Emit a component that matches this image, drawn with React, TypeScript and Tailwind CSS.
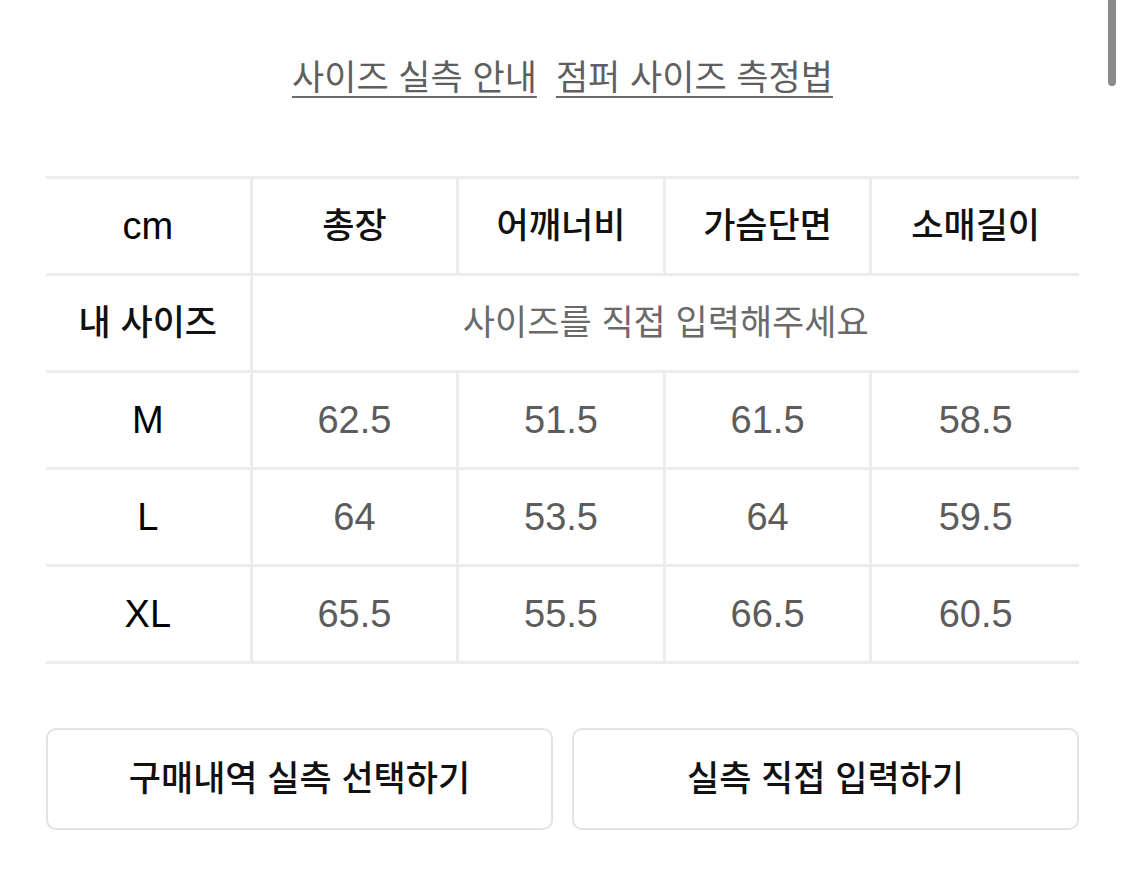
import React from 'react';

// 사이즈 표 데이터
const columns = ['총장', '어깨너비', '가슴단면', '소매길이'];

const sizes = [
  { name: 'M', values: ['62.5', '51.5', '61.5', '58.5'] },
  { name: 'L', values: ['64', '53.5', '64', '59.5'] },
  { name: 'XL', values: ['65.5', '55.5', '66.5', '60.5'] },
];

const font = "font-['Liberation_Sans','Noto_Sans_CJK_KR',sans-serif]";

const Cell: React.FC<{ last?: boolean; className?: string; children: React.ReactNode }> = ({ last, className, children }) => (
  <div
    className={`flex w-1/5 items-center justify-center ${last ? '' : 'border-r-[3px] border-[#ececec]'} ${className || ''}`}
  >
    {children}
  </div>
);

export default function App() {
  return (
    <div className={`relative min-h-[874px] w-full bg-white ${font}`}>
      {/* 스크롤바 */}
      <div className="absolute right-[9px] top-0 h-[86px] w-[8px] rounded-b-full bg-[#8b8b8b]" />

      {/* 상단 링크 */}
      <div className="flex justify-center gap-[19px] pt-[56px] text-[35px] leading-[44px] text-[#5f5f5f]">
        <span className="underline decoration-[#6a6a6a] decoration-2 underline-offset-[6px]">사이즈 실측 안내</span>
        <span className="underline decoration-[#6a6a6a] decoration-2 underline-offset-[6px]">점퍼 사이즈 측정법</span>
      </div>

      {/* 사이즈 표 */}
      <div className="mx-[46px] mt-[76px] border-t-[3px] border-[#ececec]">
        <div className="flex h-[97px] border-b-[3px] border-[#ececec]">
          <Cell className="text-[38px] text-black">cm</Cell>
          {columns.map((c, i) => (
            <Cell key={c} last={i === columns.length - 1} className="text-[35px] font-medium text-[#111]">
              {c}
            </Cell>
          ))}
        </div>
        <div className="flex h-[97px] border-b-[3px] border-[#ececec]">
          <Cell className="text-[35px] font-medium text-[#111]">내 사이즈</Cell>
          <div className="flex w-4/5 items-center justify-center text-[35px] text-[#6a6a6a]">
            사이즈를 직접 입력해주세요
          </div>
        </div>
        {sizes.map((s) => (
          <div key={s.name} className="flex h-[97px] border-b-[3px] border-[#ececec]">
            <Cell className="text-[38px] text-black">{s.name}</Cell>
            {s.values.map((v, i) => (
              <Cell key={i} last={i === s.values.length - 1} className="text-[38px] text-[#5c5c5c]">
                {v}
              </Cell>
            ))}
          </div>
        ))}
      </div>

      {/* 버튼 */}
      <div className="mx-[46px] mt-[64px] flex gap-[19px]">
        <button className="flex h-[102px] flex-1 items-center justify-center rounded-[10px] border-2 border-[#e3e3e3] text-[35px] font-medium text-[#111]">
          구매내역 실측 선택하기
        </button>
        <button className="flex h-[102px] flex-1 items-center justify-center rounded-[10px] border-2 border-[#e3e3e3] text-[35px] font-medium text-[#111]">
          실측 직접 입력하기
        </button>
      </div>
    </div>
  );
}
